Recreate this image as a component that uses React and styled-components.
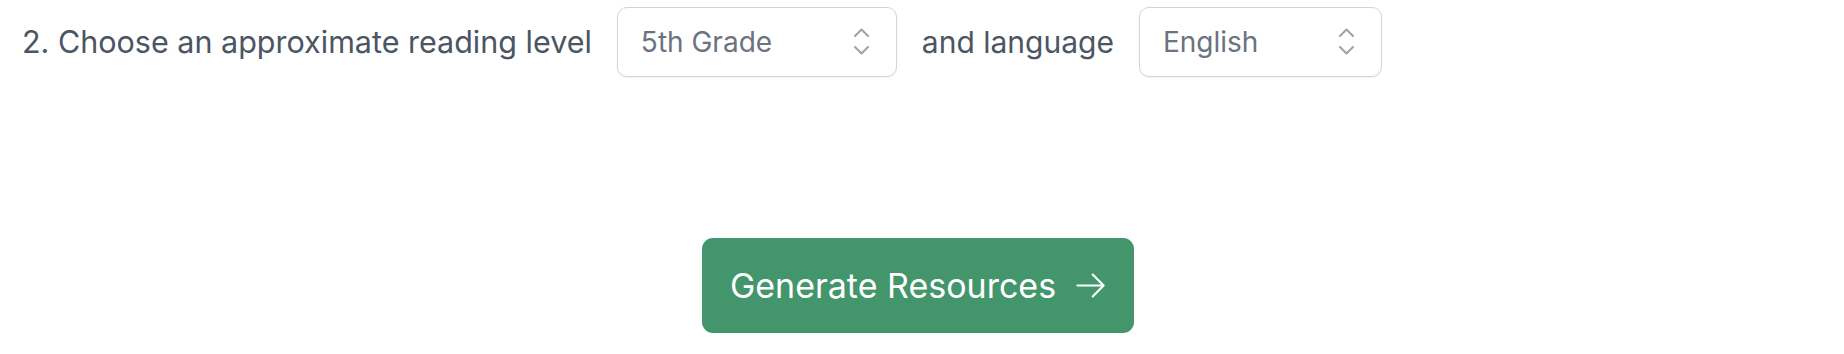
import React from "react";
import styled, { createGlobalStyle } from "styled-components";

const GlobalStyle = createGlobalStyle`
  html, body {
    margin: 0;
    padding: 0;
    background: #ffffff;
  }
  body {
    font-family: Inter, "Noto Sans", "Liberation Sans", sans-serif;
    -webkit-font-smoothing: antialiased;
  }
`;

const Page = styled.div`
  display: flex;
  flex-direction: column;
  width: 1844px;
  height: 354px;
  box-sizing: border-box;
  padding: 7px 0 0 22px;
`;

const Row = styled.div`
  display: flex;
  align-items: center;
  gap: 25px;
`;

const Label = styled.span`
  font-size: ${(p) => p.$size || 30.5}px;
  color: #4b5563;
  line-height: 1;
  white-space: nowrap;
`;

const SelectBox = styled.div`
  display: flex;
  align-items: center;
  justify-content: space-between;
  box-sizing: border-box;
  width: ${(p) => p.$width}px;
  height: 70px;
  padding: 0 27px 0 23px;
  border: 1.5px solid #d1d5db;
  border-radius: 10px;
  background: #ffffff;
  box-shadow: 0 1px 2px rgba(0, 0, 0, 0.05);
`;

const SelectValue = styled.span`
  font-size: 28px;
  color: #6b7280;
  white-space: nowrap;
`;

const Actions = styled.div`
  display: flex;
  justify-content: center;
  margin-top: 161px;
  padding-right: 30px;
`;

const Button = styled.button`
  display: flex;
  align-items: center;
  gap: 17px;
  height: 95px;
  padding: 0 26px 0 28px;
  border: none;
  border-radius: 11px;
  background: #43956c;
  color: #ffffff;
  font-family: inherit;
  font-size: 34px;
  cursor: pointer;
`;

const UpDown = () => (
  <svg width="15" height="28" viewBox="0 0 15 28" fill="none" stroke="#9ca3af" strokeWidth="2" strokeLinecap="round" strokeLinejoin="round">
    <polyline points="1,8 7.5,1.5 14,8" />
    <polyline points="1,19 7.5,25.5 14,19" />
  </svg>
);

const ArrowRight = () => (
  <svg width="35" height="35" viewBox="0 0 24 24" fill="none" stroke="currentColor" strokeWidth="1.5" strokeLinecap="round" strokeLinejoin="round">
    <path d="M13.5 4.5 21 12m0 0-7.5 7.5M21 12H3" />
  </svg>
);

export default function App() {
  return (
    <>
      <GlobalStyle />
      <Page>
        <Row>
          <Label>2. Choose an approximate reading level</Label>
          <SelectBox $width={280}>
            <SelectValue>5th Grade</SelectValue>
            <UpDown />
          </SelectBox>
          <Label $size={30}>and language</Label>
          <SelectBox $width={243}>
            <SelectValue>English</SelectValue>
            <UpDown />
          </SelectBox>
        </Row>
        <Actions>
          <Button>
            Generate Resources
            <ArrowRight />
          </Button>
        </Actions>
      </Page>
    </>
  );
}
